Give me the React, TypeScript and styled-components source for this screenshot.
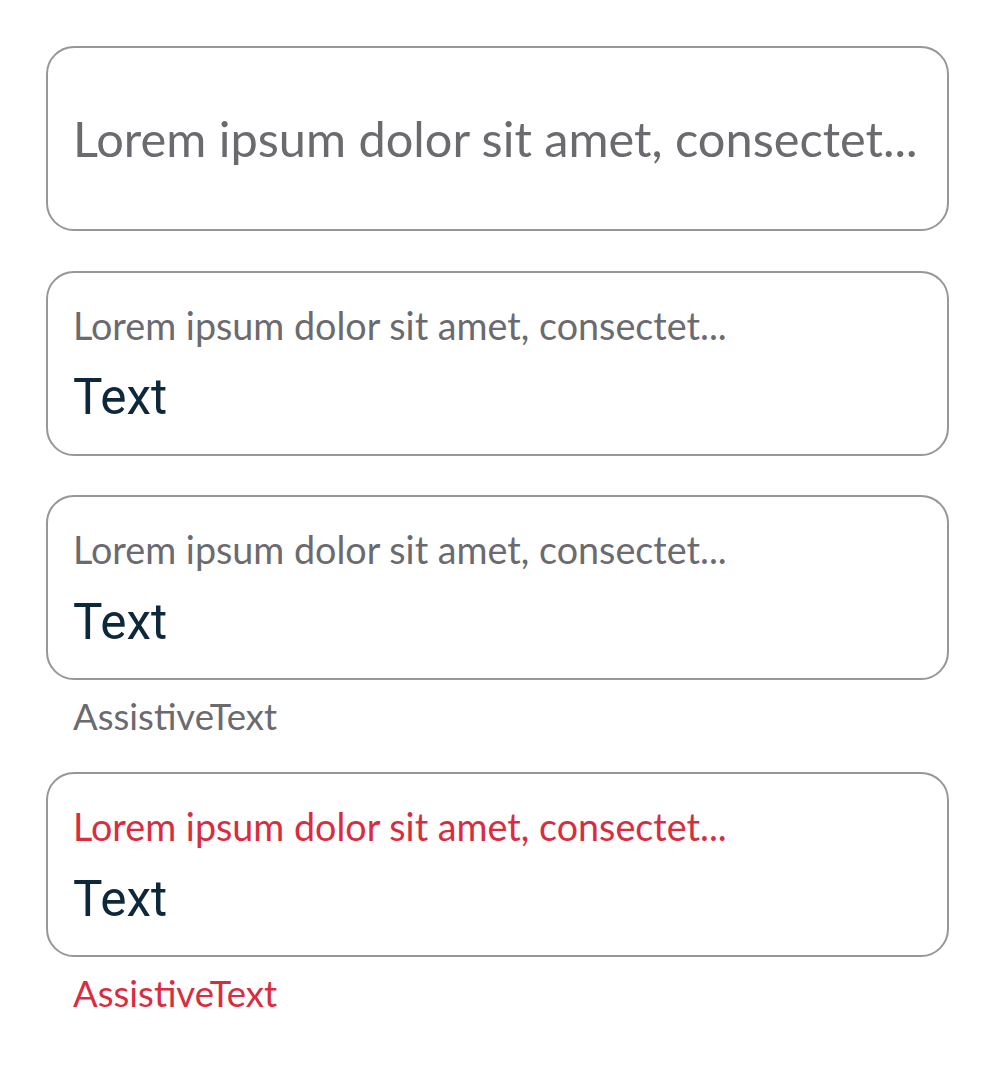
import React from "react";
import styled, { createGlobalStyle } from "styled-components";

const GlobalStyle = createGlobalStyle`
  html, body { margin: 0; padding: 0; background: #ffffff; }
  * { box-sizing: border-box; }
`;

const Page = styled.main`
  display: flex;
  flex-direction: column;
  gap: 39.5px;
  padding: 46px 47px 40px 46px;
`;

const Group = styled.section`
  display: flex;
  flex-direction: column;
`;

const Field = styled.div<{ $single?: boolean }>`
  height: 185px;
  border: 2px solid #979797;
  border-radius: 28px;
  padding: ${(p) => (p.$single ? "0 24px 0 25px" : "34px 24px 0 25px")};
  display: flex;
  flex-direction: column;
  justify-content: ${(p) => (p.$single ? "center" : "flex-start")};
  background: #ffffff;
`;

const Label = styled.div<{ $large?: boolean; $error?: boolean }>`
  font-family: Lato, "Noto Sans", sans-serif;
  font-size: ${(p) => (p.$large ? "48.7px" : "37.7px")};
  line-height: 1;
  color: ${(p) => (p.$error ? "#d92d3f" : "#6b6b6f")};
  white-space: nowrap;
`;

const Value = styled.div`
  margin-top: 29px;
  font-family: Roboto, "Liberation Sans", sans-serif;
  font-size: 49.5px;
  line-height: 1;
  color: #0e283b;
`;

const Assistive = styled.div<{ $error?: boolean }>`
  margin: 18px 0 -2px;
  padding-left: 27px;
  font-family: Lato, "Noto Sans", sans-serif;
  font-size: 36.5px;
  line-height: 1;
  color: ${(p) => (p.$error ? "#d92d3f" : "#6b6b6f")};
`;

const LABEL = "Lorem ipsum dolor sit amet, consectet...";

export default function App() {
  return (
    <>
      <GlobalStyle />
      <Page>
        <Group>
          <Field $single>
            <Label $large>{LABEL}</Label>
          </Field>
        </Group>
        <Group>
          <Field>
            <Label>{LABEL}</Label>
            <Value>Text</Value>
          </Field>
        </Group>
        <Group>
          <Field>
            <Label>{LABEL}</Label>
            <Value>Text</Value>
          </Field>
          <Assistive>AssistiveText</Assistive>
        </Group>
        <Group>
          <Field>
            <Label $error>{LABEL}</Label>
            <Value>Text</Value>
          </Field>
          <Assistive $error>AssistiveText</Assistive>
        </Group>
      </Page>
    </>
  );
}
